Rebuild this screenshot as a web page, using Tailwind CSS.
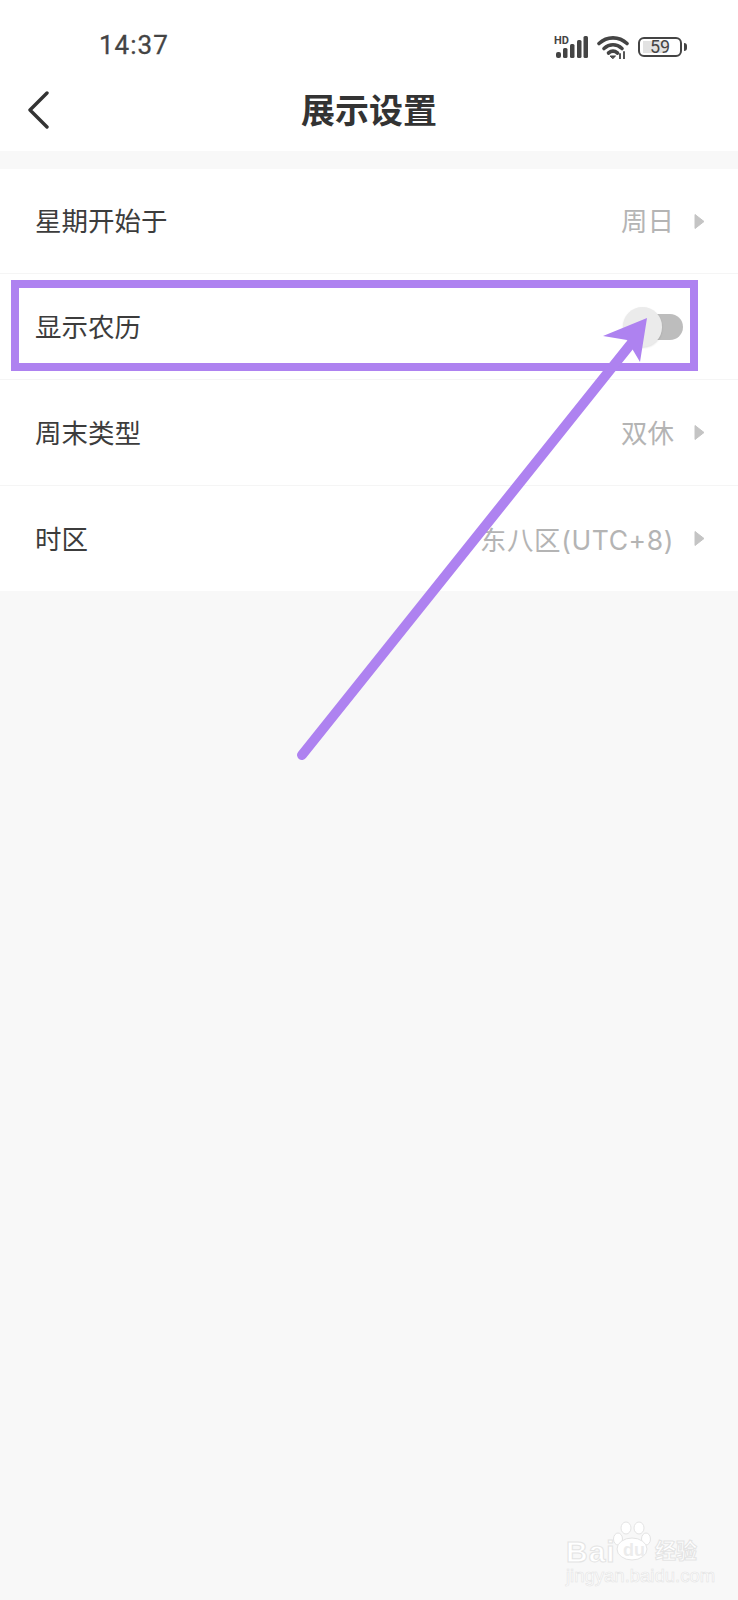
<!DOCTYPE html>
<html lang="zh-CN">
<head>
    <meta charset="UTF-8">
    <meta name="viewport" content="width=device-width, initial-scale=1.0">
    <title>展示设置</title>
    <script src="https://cdn.jsdelivr.net/npm/@tailwindcss/browser@4"></script>
</head>
<body class="relative h-[1600px] w-[738px] overflow-hidden bg-[#f8f8f8] font-['Roboto','Noto_Sans_CJK_SC',sans-serif] text-[#333]">
    <!-- status bar -->
    <div class="flex h-[68px] items-end justify-between bg-white pb-[8px] pl-[99px] pr-[51px]">
        <span class="font-['Roboto'] text-[26px] leading-[30px] font-normal tracking-[1px] text-[#444] [-webkit-text-stroke:0.3px_#444]">14:37</span>
        <div class="flex items-center gap-[9px] pb-[1px]">
            <svg width="34" height="24" viewBox="0 0 34 24" fill="#444">
                <text x="0" y="9" font-family="Roboto" font-size="11" font-weight="700">HD</text>
                <rect x="2" y="17" width="5" height="6" rx="2"/>
                <rect x="9" y="13" width="4.500" height="10" rx="1.500"/>
                <rect x="16" y="9" width="4.500" height="14" rx="1.500"/>
                <rect x="23" y="5" width="4.500" height="18" rx="1.500"/>
                <rect x="29.500" y="1" width="4.500" height="22" rx="1.500"/>
            </svg>
            <svg width="32" height="24" viewBox="0 0 32 24" fill="none" stroke="#444" stroke-width="3.6" stroke-linecap="round">
                <path d="M2 8.500C10 1 22 1 30 8.500"/>
                <path d="M7 13.500C12.500 8.500 19.500 8.500 25 13.500"/>
                <path d="M11.500 18C14.500 15.500 17.500 15.500 20.500 18"/>
                <path d="M13.500 21h5l-2.500 2.500z" fill="#444" stroke-width="1"/>
                <path d="M23 19v5M27 17v7" stroke-width="1.800"/>
            </svg>
            <div class="flex items-center gap-[2px]">
                <div class="relative flex h-[20px] w-[44px] items-center justify-center overflow-hidden rounded-[6px] border-2 border-[#444] text-[18px] leading-none text-[#444]">
                    <span class="absolute top-[2px] bottom-[2px] left-[3px] w-[24px] bg-[#e2e2e2]"></span>
                    <span class="relative font-['Roboto']">59</span>
                </div>
                <span class="h-[8px] w-[3px] rounded-r-sm bg-[#444]"></span>
            </div>
        </div>
    </div>

    <!-- nav -->
    <header class="relative flex h-[83px] items-center justify-center bg-white">
        <svg class="absolute top-[23px] left-[27px]" width="24" height="38" viewBox="0 0 24 38" fill="none" stroke="#333" stroke-width="3.4" stroke-linecap="round" stroke-linejoin="round">
            <path d="M20 2L3 19l17 17"/>
        </svg>
        <h1 class="pt-[2px] text-[34px] leading-none font-bold text-[#333]">展示设置</h1>
    </header>

    <!-- settings -->
    <div class="mt-[18px] divide-y divide-[#f5f5f5] bg-white text-[26.500px] leading-none">
        <div class="flex h-[105px] items-center pr-[33px] pl-[35px]">
            <span class="flex-1 pt-[3px] text-[#3c3c3c]">星期开始于</span>
            <span class="pt-[3px] text-[#b4b4b4]">周日</span>
            <svg class="ml-[20px]" width="11" height="17" viewBox="0 0 11 17" fill="#c4c4c4"><path d="M1 1.500L10 8.500 1 15.500z" stroke="#c4c4c4" stroke-linejoin="round"/></svg>
        </div>
        <div class="flex h-[106px] items-center pr-[55px] pl-[35px]">
            <span class="flex-1 pt-[3px] text-[#3c3c3c]">显示农历</span>
            <div class="relative h-[26px] w-[44px] rounded-full bg-[#bdbdbd]">
                <span class="absolute top-[-7px] left-[-16px] h-[40px] w-[39px] rounded-full bg-[#ebebeb] shadow-[0_1px_2px_rgba(0,0,0,0.12)]"></span>
            </div>
        </div>
        <div class="flex h-[106px] items-center pr-[33px] pl-[35px]">
            <span class="flex-1 pt-[3px] text-[#3c3c3c]">周末类型</span>
            <span class="pt-[3px] text-[#b4b4b4]">双休</span>
            <svg class="ml-[20px]" width="11" height="17" viewBox="0 0 11 17" fill="#c4c4c4"><path d="M1 1.500L10 8.500 1 15.500z" stroke="#c4c4c4" stroke-linejoin="round"/></svg>
        </div>
        <div class="flex h-[105px] items-center pr-[33px] pl-[35px]">
            <span class="flex-1 pt-[3px] text-[#3c3c3c]">时区</span>
            <span class="pt-[3px] font-['Inter','Noto_Sans_CJK_SC',sans-serif] tracking-[0.6px] text-[#b4b4b4]">东八区(UTC+8)</span>
            <svg class="ml-[20px]" width="11" height="17" viewBox="0 0 11 17" fill="#c4c4c4"><path d="M1 1.500L10 8.500 1 15.500z" stroke="#c4c4c4" stroke-linejoin="round"/></svg>
        </div>
    </div>

    <!-- annotation drawn over the screenshot -->
    <div class="absolute top-[280px] left-[11px] h-[91px] w-[687px] border-[8.500px] border-[#ae82f0]"></div>
    <svg class="absolute top-0 left-0" width="738" height="800" viewBox="0 0 738 800">
        <path d="M302 755L630 345" stroke="#ae82f0" stroke-width="10" stroke-linecap="round"/>
        <path d="M647 318L603 336 627 340 640 362z" fill="#ae82f0"/>
    </svg>

    <!-- baidu watermark -->
    <div class="absolute top-[1530px] left-[566px] h-[60px] w-[140px] text-white">
        <span class="absolute top-[8px] left-0 font-['Liberation_Sans'] text-[30px] leading-[28px] font-bold tracking-[1px] [-webkit-text-stroke:1px_#e4e4e4]">Bai</span>
        <svg class="absolute top-[-9px] left-[46px]" width="40" height="42" viewBox="0 0 40 42" fill="#fff" stroke="#e4e4e4">
            <ellipse cx="6" cy="18" rx="4.500" ry="6"/>
            <ellipse cx="14" cy="7" rx="5" ry="6"/>
            <ellipse cx="27" cy="7" rx="5" ry="6"/>
            <ellipse cx="34" cy="18" rx="4.500" ry="6"/>
            <ellipse cx="20" cy="28" rx="15" ry="11"/>
        </svg>
        <span class="absolute top-[10px] left-[57px] font-['Liberation_Sans'] text-[18px] leading-[20px] font-bold text-[#ececec]">du</span>
        <span class="absolute top-[8px] left-[89px] text-[21px] leading-[26px] font-bold [-webkit-text-stroke:1px_#e4e4e4]">经验</span>
        <span class="absolute top-[38px] left-0 font-['Liberation_Sans'] text-[18.500px] leading-[16px] [-webkit-text-stroke:0.6px_#e4e4e4]">jingyan.baidu.com</span>
    </div>
</body>
</html>
